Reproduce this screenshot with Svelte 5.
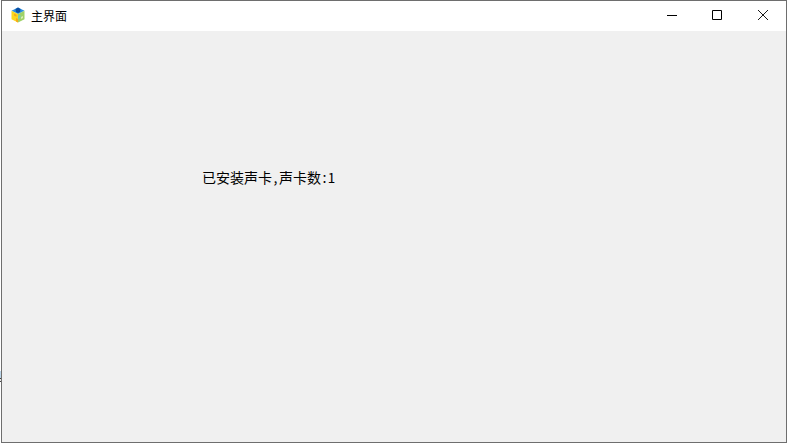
<script lang="ts">
  let title = "主界面";
  let status = "已安装声卡,声卡数:1";
</script>

<div class="window">
  <header class="titlebar">
    <svg class="logo" width="16" height="16" viewBox="0 0 16 16">
      <path d="M8 .5l6.5 3.2L8 7 1.5 3.7z" fill="#2a8fe0" />
      <path d="M5.5 2L8 .5 10.5 2 10 5 8 6 6 5z" fill="#0a4ea3" />
      <path d="M1.5 3.7L8 7v8.5l-6.5-3.3z" fill="#fbd71e" />
      <path d="M14.5 3.7L8 7v8.5l6.5-3.3z" fill="#9fd268" />
      <path d="M4 6.5l2.5 1.2v2L4 8.5zM6 11l2 1v3.5l-2-1z" fill="#f6a81c" />
      <path d="M8 9l2.5-1.2v3L8 12z" fill="#7cc8b0" />
      <path d="M11 10l2-1v2l-2 1z" fill="#d7eeb5" />
    </svg>
    <span class="title">{title}</span>
    <div class="controls">
      <button class="min" aria-label="最小化">
        <svg width="10" height="10" viewBox="0 0 10 10"><path d="M0 5.5h10" stroke="#000" fill="none" /></svg>
      </button>
      <button aria-label="最大化">
        <svg width="10" height="10" viewBox="0 0 10 10"><path d="M.5.5h9v9h-9z" stroke="#000" fill="none" /></svg>
      </button>
      <button aria-label="关闭">
        <svg width="10" height="10" viewBox="0 0 10 10"><path d="M0 0l10 10M10 0L0 10" stroke="#000" fill="none" stroke-width="0.9" /></svg>
      </button>
    </div>
  </header>
  <main class="content">
    <p class="status">{status}</p>
  </main>
</div>
<span class="edge"></span>

<style>
  :global(body) {
    background: #fff;
  }
  .window {
    box-sizing: border-box;
    display: flex;
    flex-direction: column;
    width: 786px;
    height: 443px;
    margin-left: 1px;
    border: 1px solid #6e6e6e;
    font-family: "Liberation Sans", "Noto Sans CJK SC", sans-serif;
    color: #000;
  }
  .titlebar {
    display: flex;
    align-items: center;
    height: 30px;
    padding: 0 0 2px 8px;
    box-sizing: border-box;
    background: #fff;
  }
  .logo {
    flex: none;
  }
  .title {
    margin-left: 5px;
    font-size: 12px;
  }
  .controls {
    display: flex;
    margin-left: auto;
  }
  .controls button {
    display: flex;
    align-items: center;
    justify-content: center;
    width: 46px;
    height: 28px;
    padding: 0;
    border: 0;
    background: none;
  }
  .controls .min {
    padding-left: 2px;
  }
  .content {
    flex: 1;
    padding: 138px 0 0 200px;
    background: #f0f0f0;
  }
  .status {
    margin: 0;
    font-family: "Noto Sans CJK SC", sans-serif;
    font-feature-settings: "hwid";
    font-size: 14px;
    line-height: 16px;
  }
  /* сбоку от окна торчит кусочек того, что было под ним */
  .edge {
    position: absolute;
    left: 0;
    top: 371px;
    width: 1px;
    height: 11px;
    background: linear-gradient(#bcd6ea 0 7px, #444 7px 8px, #e8e8e8 8px 10px, #444 10px);
  }
</style>
